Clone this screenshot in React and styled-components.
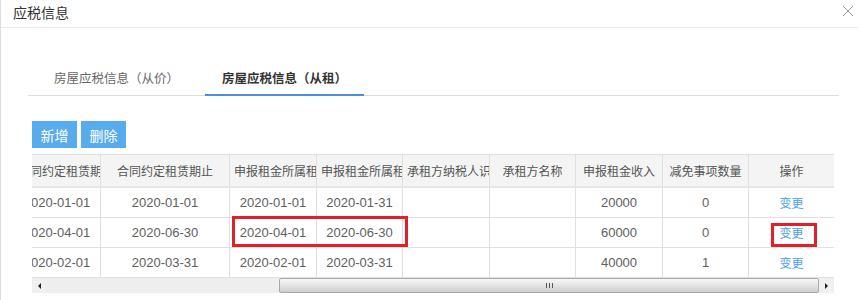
import React from 'react';
import styled, { createGlobalStyle } from 'styled-components';

const Global = createGlobalStyle`
  body {
    margin: 0;
    background: #fff;
    font-family: "Liberation Sans", "Noto Sans CJK SC", sans-serif;
  }
`;

const Modal = styled.div`
  width: 860px;
  height: 300px;
  box-sizing: border-box;
  border-left: 1px solid #ddd;
  overflow: hidden;
  background: #fff;
`;

const Header = styled.div`
  height: 27px;
  border-bottom: 1px solid #ebebeb;
  display: flex;
  align-items: center;
  justify-content: space-between;
  padding: 0 4px 0 12px;
  margin-right: 2px;
`;

const Title = styled.div`
  font-size: 14px;
  color: #333;
  margin-top: -3px;
`;

const Close = styled.button`
  border: 0;
  background: none;
  padding: 0;
  width: 12px;
  height: 12px;
  margin-top: -5px;
  display: flex;
`;

const Body = styled.div`
  padding: 33px 21px 0 27px;
`;

const Tabs = styled.div`
  display: flex;
  gap: 9px;
  padding-left: 9px;
  border-bottom: 1px solid #ddd;
`;

const Tab = styled.div`
  height: 35px;
  line-height: 34px;
  padding: 0 17px;
  font-size: 12.5px;
  color: ${p => (p.$active ? '#333' : '#666')};
  font-weight: ${p => (p.$active ? 'bold' : 'normal')};
  border-bottom: 2px solid ${p => (p.$active ? '#4a8fe2' : 'transparent')};
  margin-bottom: -1px;
  box-sizing: border-box;
  font-family: "Noto Sans CJK SC", sans-serif;
`;

const Toolbar = styled.div`
  display: flex;
  gap: 4px;
  margin: 25px 0 6px 4px;
`;

const Button = styled.button`
  height: 27px;
  width: 45px;
  border: 0;
  padding: 0;
  background: #58acee;
  color: #fff;
  font-size: 14px;
  font-family: "Noto Sans CJK SC", sans-serif;
`;

const TableArea = styled.div`
  position: relative;
  margin-left: 4px;
  width: 802px;
`;

const Viewport = styled.div`
  width: 802px;
  overflow: hidden;
`;

const Table = styled.table`
  border-collapse: collapse;
  table-layout: fixed;
  width: 821px;
  margin-left: -19px;
`;

const Th = styled.th`
  height: 31px;
  padding: 0 4px;
  background: #f4f4f4;
  border: 1px solid #e0e0e0;
  border-bottom: 2px solid #e6e6e6;
  font-size: 12px;
  font-weight: normal;
  color: #555;
  white-space: nowrap;
  overflow: hidden;
  text-align: center;
  font-family: "Noto Sans CJK SC", sans-serif;
`;

const Td = styled.td`
  height: 29px;
  padding: 0 4px;
  border: 1px solid #e0e0e0;
  font-size: 13px;
  color: #5e5e5e;
  text-align: center;
  white-space: nowrap;
  overflow: hidden;
`;

const Link = styled.a`
  color: #4a9fe6;
  font-size: 12px;
  font-family: "Noto Sans CJK SC", sans-serif;
  text-decoration: none;
`;

const Mark = styled.div`
  position: absolute;
  border: 3px solid #e3202a;
  box-sizing: border-box;
  pointer-events: none;
`;

const Scrollbar = styled.div`
  display: flex;
  height: 15px;
  background: #f0f0f0;
`;

const Arrow = styled.div`
  width: 15px;
  display: flex;
  align-items: center;
  justify-content: center;
  background: #f0f0f0;
  &::before {
    content: '';
    border-top: 3px solid transparent;
    border-bottom: 3px solid transparent;
    ${p => (p.$dir === 'left' ? 'border-right: 3px solid #222;' : 'border-left: 3px solid #222;')}
  }
`;

const Track = styled.div`
  flex: 1;
  display: flex;
  background: #eeeeee;
`;

const Thumb = styled.div`
  margin-left: auto;
  width: 540px;
  box-sizing: border-box;
  border: 1px solid #a9a9a9;
  border-radius: 2px;
  background: linear-gradient(#f7f7f7, #e2e2e2 55%, #cfcfcf);
  display: flex;
  align-items: center;
  justify-content: center;
  gap: 2px;
`;

const Grip = styled.span`
  width: 1px;
  height: 5px;
  background: #555;
`;

const columns = [
  { title: '合同约定租赁期起', width: 87 },
  { title: '合同约定租赁期止', width: 129 },
  { title: '申报租金所属租期起', width: 87 },
  { title: '申报租金所属租期止', width: 86 },
  { title: '承租方纳税人识别号', width: 87 },
  { title: '承租方名称', width: 86 },
  { title: '申报租金收入', width: 87 },
  { title: '减免事项数量', width: 86 },
  { title: '操作', width: 86 },
];

const rows = [
  ['2020-01-01', '2020-01-01', '2020-01-01', '2020-01-31', '', '', '20000', '0'],
  ['2020-04-01', '2020-06-30', '2020-04-01', '2020-06-30', '', '', '60000', '0'],
  ['2020-02-01', '2020-03-31', '2020-02-01', '2020-03-31', '', '', '40000', '1'],
];

export default function App() {
  return (
    <>
      <Global />
      <Modal>
        <Header>
          <Title>应税信息</Title>
          <Close aria-label="关闭">
            <svg width="12" height="12" viewBox="0 0 12 12">
              <path d="M1 1L11 11M11 1L1 11" stroke="#9a9a9a" strokeWidth="1" fill="none" />
            </svg>
          </Close>
        </Header>
        <Body>
          <Tabs>
            <Tab>房屋应税信息（从价）</Tab>
            <Tab $active>房屋应税信息（从租）</Tab>
          </Tabs>
          <Toolbar>
            <Button>新增</Button>
            <Button>删除</Button>
          </Toolbar>
          <TableArea>
            <Viewport>
              <Table>
                <colgroup>
                  {columns.map(c => (
                    <col key={c.title} style={{ width: c.width }} />
                  ))}
                </colgroup>
                <thead>
                  <tr>
                    {columns.map(c => (
                      <Th key={c.title}>{c.title}</Th>
                    ))}
                  </tr>
                </thead>
                <tbody>
                  {rows.map((r, i) => (
                    <tr key={i}>
                      {r.map((v, j) => (
                        <Td key={j}>{v}</Td>
                      ))}
                      <Td>
                        <Link href="#">变更</Link>
                      </Td>
                    </tr>
                  ))}
                </tbody>
              </Table>
            </Viewport>
            <Scrollbar>
              <Arrow $dir="left" />
              <Track>
                <Thumb>
                  <Grip />
                  <Grip />
                  <Grip />
                </Thumb>
              </Track>
              <Arrow $dir="right" />
            </Scrollbar>
            <Mark style={{ left: 200, top: 62, width: 176, height: 31 }} />
            <Mark style={{ left: 739, top: 69, width: 46, height: 24 }} />
          </TableArea>
        </Body>
      </Modal>
    </>
  );
}
